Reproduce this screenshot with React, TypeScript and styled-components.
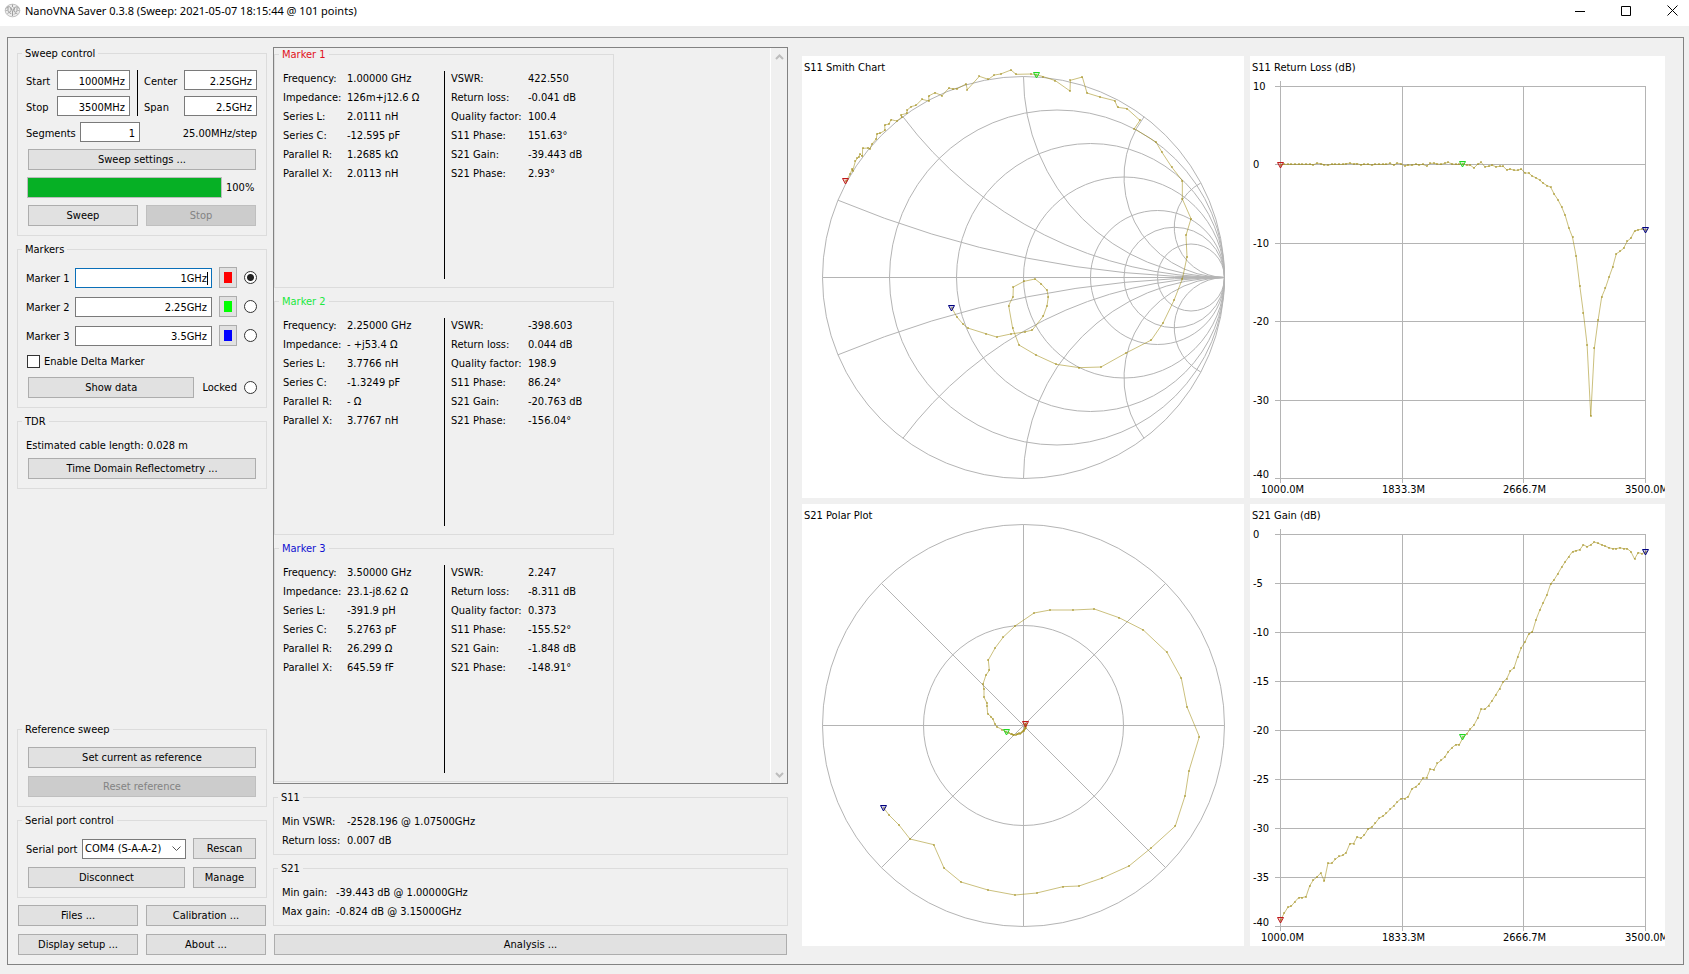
import React from 'react';
import styled, { createGlobalStyle } from 'styled-components';

const UI_FONT = '"DejaVu Sans Condensed", "DejaVu Sans", sans-serif';

const GlobalStyle = createGlobalStyle`
  * { box-sizing: border-box; }
  body {
    margin: 0;
    background: #f0f0f0;
    color: #000;
    font: 11px/13px ${UI_FONT};
  }
  button, input, select { font: inherit; color: inherit; margin: 0; }
`;

/* ---------- window ---------- */

const Window = styled.div`
  display: flex;
  flex-direction: column;
  min-height: 100vh;
`;

const TitleBar = styled.header`
  display: flex;
  align-items: center;
  height: 26px;
  padding: 0 0 5px 4px;
  background: #fff;
`;

const Title = styled.h1`
  margin: 0 auto 0 4px;
  font: 400 11px/16px "Noto Sans", sans-serif;
  white-space: nowrap;
`;

const WindowButtons = styled.div`
  display: flex;
  gap: 12px;
`;

const WindowButton = styled.button`
  display: flex;
  align-items: center;
  justify-content: center;
  width: 34px;
  height: 18px;
  padding: 0;
  border: 0;
  background: none;
`;

const Frame = styled.main`
  flex: 1;
  display: flex;
  gap: 6px;
  margin: 11px 5px 9px 7px;
  padding: 9px;
  border: 1px solid #828282;
`;

/* ---------- shared parts ---------- */

const Group = styled.fieldset<{ $tight?: boolean }>`
  display: flex;
  flex-direction: column;
  gap: 8px;
  min-width: 0;
  margin: 0;
  padding: ${(p) => (p.$tight ? 10 : 11)}px 9px 9px 8px;
  border: 1px solid #dcdcdc;
`;

const GroupTitle = styled.legend<{ $color?: string }>`
  margin-left: -4px;
  padding: 0 3px;
  color: ${(p) => p.$color ?? 'inherit'};
`;

const Button = styled.button`
  flex: 1;
  min-height: 21px;
  max-height: 21px;
  padding: 0 4px;
  border: 1px solid #adadad;
  background: #e1e1e1;
  white-space: nowrap;

  &:disabled {
    border-color: #bfbfbf;
    background: #ccc;
    color: #838383;
  }
`;

const ButtonRow = styled.div`
  display: flex;
  gap: 8px;
  margin: 0 1px 0 2px;
`;

const FieldLabel = styled.label`
  padding-top: 2px;
  white-space: nowrap;
`;

const TextInput = styled.input<{ $active?: boolean }>`
  width: 100%;
  min-width: 0;
  height: 20px;
  padding: 2px 4px 0;
  border: 1px solid ${(p) => (p.$active ? '#0a6fb8' : '#7a7a7a')};
  outline: 0;
  background: #fff;
  text-align: right;
`;

const Radio = styled.input`
  appearance: none;
  flex: none;
  justify-self: end;
  width: 13px;
  height: 13px;
  border: 1px solid #333;
  border-radius: 50%;
  background: #fff;

  &:checked {
    background: radial-gradient(circle, #222 3px, #fff 4px);
  }
`;

/* ---------- left column ---------- */

const Side = styled.aside`
  flex: none;
  display: flex;
  flex-direction: column;
  gap: 7px;
  width: 250px;
`;

const SideBottom = styled.div`
  display: flex;
  flex-direction: column;
  gap: 7px;
  margin-top: auto;
`;

const SweepGrid = styled.div`
  display: grid;
  grid-template-columns: 31px 1fr 14px 40px 1fr;
  row-gap: 6px;
  align-items: center;
`;

const Divider = styled.span`
  grid-area: 1 / 3 / 3 / 4;
  justify-self: center;
  align-self: stretch;
  width: 1px;
  background: #000;
`;

const SegmentRow = styled.div`
  display: grid;
  grid-template-columns: 54px 60px 1fr;
  align-items: center;
  margin: -2px 0 -1px;
`;

const Step = styled.span`
  padding-top: 2px;
  text-align: right;
`;

const SweepStack = styled.div`
  display: flex;
  flex-direction: column;
  gap: 7px;
`;

const ProgressRow = styled.label`
  display: flex;
  align-items: center;
  gap: 4px;
  margin-left: 1px;
`;

const Progress = styled.progress`
  appearance: none;
  flex: 1;
  min-width: 0;
  height: 21px;
  border: 1px solid #bcbcbc;

  &::-webkit-progress-bar { background: #e6e6e6; }
  &::-webkit-progress-value { background: #06b025; }
`;

const Percent = styled.span`
  width: 31px;
`;

const MarkerLine = styled.div`
  display: grid;
  grid-template-columns: 49px 1fr 18px 20px;
  align-items: center;
  height: 21px;
`;

const MarkerField = styled.div`
  position: relative;
  display: flex;
  margin-right: 7px;
`;

const Caret = styled.span`
  position: absolute;
  top: 4px;
  right: 4px;
  width: 1px;
  height: 13px;
  background: #000;
`;

const ColorButton = styled.button<{ $color: string }>`
  width: 18px;
  height: 21px;
  padding: 4px;
  border: 1px solid #adadad;
  background: linear-gradient(${(p) => p.$color}, ${(p) => p.$color}) content-box, #e1e1e1;
`;

const CheckRow = styled.label`
  display: flex;
  align-items: center;
  gap: 4px;
  height: 15px;
  margin-left: 1px;
`;

const CheckBox = styled.input`
  appearance: none;
  width: 13px;
  height: 13px;
  border: 1px solid #333;
  background: #fff;
`;

const ShowRow = styled.div`
  display: flex;
  align-items: center;
  margin-left: 2px;
`;

const LockedLabel = styled.label`
  display: flex;
  align-items: center;
  gap: 7px;
  margin-left: 8px;
`;

const CableLine = styled.div`
  display: flex;
  gap: 3px;
  margin-bottom: -2px;
  white-space: nowrap;
`;

const PortGrid = styled.div`
  display: grid;
  grid-template-columns: 56px 1fr 63px;
  gap: 8px 0;
  align-items: center;
  margin-right: 1px;
`;

const SelectBox = styled.div`
  position: relative;
  margin-right: 7px;

  & > svg { position: absolute; right: 5px; top: 7px; pointer-events: none; }
`;

const Select = styled.select`
  appearance: none;
  display: block;
  width: 100%;
  height: 20px;
  padding: 0 16px 0 2px;
  border: 1px solid #7a7a7a;
  border-radius: 0;
  background: #fff;
`;

const Disconnect = styled(Button)`
  grid-column: 1 / 3;
  margin: 0 8px 0 2px;
`;

const FooterButtons = styled.div`
  display: grid;
  grid-template-columns: 1fr 1fr;
  gap: 8px;
  margin: 0 1px;
`;

/* ---------- middle column ---------- */

const Middle = styled.section`
  flex: none;
  display: flex;
  flex-direction: column;
  gap: 7px;
  width: 515px;
`;

const ScrollArea = styled.div`
  flex: 1;
  display: flex;
  justify-content: space-between;
  border: 1px solid #828282;
`;

const MarkerList = styled.div`
  display: flex;
  flex-direction: column;
  gap: 7px;
  width: 340px;
`;

const MarkerGroup = styled(Group)`
  padding-bottom: 8px;
`;

const Facts = styled.dl<{ $label: number }>`
  display: grid;
  grid-template-columns: ${(p) => p.$label}px 1fr;
  align-content: start;
  row-gap: 6px;
  margin: 0;
  white-space: nowrap;

  & dt, & dd { margin: 0; }
`;

const MarkerColumns = styled.div`
  display: grid;
  grid-template-columns: 161px 1px 1fr;
  min-height: 208px;

  & > ${Facts} { margin-top: 1px; }
  & > ${Facts}:last-child { margin-left: 6px; }
`;

const Rule = styled.span`
  background: #000;
`;

const ScrollBar = styled.div`
  display: flex;
  flex-direction: column;
  align-items: center;
  justify-content: space-between;
  width: 17px;
  padding: 6px 0 5px;
  border-left: 1px solid #fff;
`;

const StatGroup = styled(Group)`
  padding-bottom: 7px;
`;

const AnalysisRow = styled(ButtonRow)`
  margin: 1px 1px 0;
`;

/* ---------- charts ---------- */

const Charts = styled.section`
  flex: 1;
  min-width: 0;
  display: grid;
  grid-template-columns: 442fr 415fr;
  grid-template-rows: repeat(2, minmax(0, 1fr));
  gap: 6px;
  padding: 9px 9px 9px 8px;
`;

const ChartPanel = styled.figure`
  display: flex;
  min-width: 0;
  margin: 0;
  background: #fff;
`;

const Plot = styled.svg`
  width: 100%;
  height: 100%;
  font: 11px ${UI_FONT};
`;

const GridLines = styled.g`
  fill: none;
  stroke: #b4b4b4;
  shape-rendering: crispEdges;
`;

const CurveGrid = styled.g`
  fill: none;
  stroke: #b4b4b4;
`;

type Point = [number, number];

const GOLD = 'rgb(160, 140, 20)';
const RED = '#c01818';
const GREEN = '#20d820';
const BLUE = '#000080';

const Trace = ({ points }: { points: Point[] }) => (
  <g>
    {points.slice(1).map(([x, y], i) => (
      <path key={i} d={`M${points[i].join(' ')}L${x} ${y}`} stroke={GOLD} strokeOpacity="0.550" />
    ))}
    {points.map(([x, y], i) => (
      <rect key={i} x={Math.round(x) - 1} y={Math.round(y) - 1} width="2" height="2" fill={GOLD} fillOpacity="0.500" />
    ))}
  </g>
);

const Flag = ({ at, color }: { at: Point; color: string }) => (
  <path
    d="M-3 -2.500h6l-3 5.500z"
    transform={`translate(${Math.floor(at[0]) + 0.5} ${Math.round(at[1])})`}
    fill={color}
    fillOpacity="0.2"
    stroke={color}
  />
);

const C = 221.5;
const R = 201;

const pairs = (flat: number[], dy: number): Point[] => {
  const out: Point[] = [];
  for (let i = 0; i < flat.length; i += 2) out.push([flat[i] / 3 - 2, flat[i + 1] / 3 - dy]);
  return out;
};

/* Traces are kept on a three-times grid of the plot area. */
const smithTrace = pairs([
  138, 424, 150, 403, 157, 386, 158, 393, 166, 364, 172, 354, 176, 352, 180, 342, 187, 349, 188, 325, 205, 324,
  210, 327, 216, 312, 229, 297, 231, 281, 240, 280, 255, 271, 254, 255, 267, 252, 273, 239, 290, 243, 305, 232,
  303, 225, 320, 220, 322, 210, 333, 200, 348, 196, 366, 178, 387, 183, 386, 168, 405, 158, 426, 167, 447, 144,
  459, 147, 472, 146, 498, 132, 502, 149, 538, 109, 565, 118, 583, 105, 602, 102, 633, 90, 648, 103, 692, 102,
  708, 104, 730, 110, 766, 122, 810, 153, 811, 121, 847, 111, 861, 159, 900, 171, 944, 182, 953, 202, 981, 206,
  1020, 241, 1003, 266, 1068, 306, 1086, 337, 1115, 381, 1147, 422, 1147, 477, 1173, 536, 1158, 586, 1161, 651,
  1147, 717, 1122, 781, 1089, 849, 1054, 900, 978, 939, 903, 981, 838, 983, 769, 973, 708, 945, 657, 915,
  638, 865, 626, 797, 639, 770, 640, 741, 672, 724, 705, 717, 724, 732, 741, 751, 745, 770, 741, 797, 730, 828,
  697, 870, 674, 876, 632, 882, 590, 891, 557, 881, 503, 864, 488, 851, 470, 830, 456, 805,
], 16);

const polarTrace = pairs([
  676, 672, 678, 673, 677, 676, 678, 679, 676, 680, 677, 683, 675, 685, 675, 688, 672, 690, 671, 693, 668, 694,
  667, 697, 664, 698, 660, 701, 658, 700, 655, 703, 650, 703, 647, 705, 642, 704, 639, 705, 636, 702, 632, 702,
  628, 699, 619, 696, 607, 689, 590, 680, 585, 672, 579, 658, 573, 650, 563, 641, 561, 618, 561, 609, 552, 592,
  552, 568, 549, 552, 558, 525, 568, 511, 565, 480, 586, 443, 610, 411, 645, 378, 702, 339, 750, 330, 819, 330,
  883, 327, 957, 353, 1030, 390, 1101, 457, 1144, 535, 1161, 621, 1198, 710, 1167, 812, 1155, 888, 1126, 978,
  1052, 1045, 987, 1098, 907, 1134, 837, 1158, 789, 1160, 710, 1179, 645, 1185, 564, 1170, 483, 1146, 432, 1104,
  401, 1034, 330, 1017, 297, 975, 267, 945, 252, 925,
], 4);

const reactanceArc = (x: number, sign: 1 | -1) => {
  const theta = 2 * Math.atan(1 / x);
  const px = C + R * Math.cos(theta);
  const py = C - sign * R * Math.sin(theta);
  return `M${px} ${py}A${R / x} ${R / x} 0 0 ${sign === 1 ? 0 : 1} ${C + R} ${C}`;
};

const SmithChart = () => (
  <Plot viewBox="0 0 442 442" role="img" aria-label="S11 Smith Chart">
    <CurveGrid>
      {[1, 5 / 6, 2 / 3, 1 / 2, 1 / 3, 1 / 4, 1 / 6].map((f) => (
        <circle key={f} cx={C + R * (1 - f)} cy={C} r={R * f} />
      ))}
      {[0.2, 0.5, 1, 2, 4].map((x) => (
        <path key={x} d={reactanceArc(x, 1) + reactanceArc(x, -1)} />
      ))}
      <path d={`M${C - R} ${C}H${C + R}`} />
    </CurveGrid>
    <text x="2" y="15">S11 Smith Chart</text>
    <Trace points={smithTrace} />
    <Flag at={[43, 125]} color={RED} />
    <Flag at={[234, 19]} color={GREEN} />
    <Flag at={[149, 252]} color={BLUE} />
  </Plot>
);

const PolarChart = () => {
  const d = R * Math.SQRT1_2;
  return (
    <Plot viewBox="0 0 442 442" role="img" aria-label="S21 Polar Plot">
      <CurveGrid>
        <circle cx={C} cy={C} r={R} />
        <circle cx={C} cy={C} r={100} />
        <path d={`M${C - R} ${C}H${C + R}M${C} ${C - R}V${C + R}`} />
        <path d={`M${C - d} ${C - d}L${C + d} ${C + d}M${C - d} ${C + d}L${C + d} ${C - d}`} />
      </CurveGrid>
      <text x="2" y="15">S21 Polar Plot</text>
      <Trace points={polarTrace} />
      <Flag at={[223, 220]} color={RED} />
      <Flag at={[204, 228]} color={GREEN} />
      <Flag at={[81, 304]} color={BLUE} />
    </Plot>
  );
};

const returnLoss = [
  -0.04, 0, 0, 0, 0, 0, 0, 0, 0, -0.05, 0.15, 0.1, -0.05, -0.1, 0, 0, 0, 0, 0.1, 0.15, 0.05, 0.1, -0.05, 0, 0,
  -0.08, 0, 0, 0, 0, 0.12, -0.08, 0.15, 0.08, -0.18, -0.1, -0.1, 0, -0.05, 0, -0.2, 0.12, 0.15, 0.05, 0, 0.15,
  0.25, 0.05, 0, 0, 0.04, -0.1, -0.1, -0.45, 0, 0.25, -0.3, -0.25, -0.1, -0.3, -0.25, -0.25, -0.7, -0.6, -0.75,
  -0.75, -0.6, -1.1, -1.1, -1.5, -1.7, -2, -2.4, -2.7, -2.9, -3.8, -4.5, -5.4, -6.5, -8.1, -9.3, -11.7, -15.5,
  -19, -23, -32.1, -23.4, -19.9, -16.9, -15.8, -14.4, -13.1, -11.4, -11.1, -10.7, -9.8, -9.4, -8.5, -8.35, -8.25,
  -8.31,
];

const gain = [
  -39.4, -38.7, -38.1, -37.95, -37.5, -37.1, -37.1, -37, -35.9, -35.3, -35, -34.6, -35.4, -33.6, -33.6, -33.2,
  -32.9, -32.8, -32.5, -31.6, -31.6, -30.9, -31.05, -30.7, -30.1, -29.9, -29.5, -29, -28.8, -28.5, -28.1, -27.75,
  -27.35, -27, -27, -26.8, -26, -25.8, -25.5, -24.9, -24.9, -24, -24.05, -23.4, -23.1, -22.75, -22.2, -21.8,
  -21.5, -21.5, -20.76, -20.4, -19.9, -19.5, -18.8, -17.85, -17.9, -17.5, -17, -16.4, -15.8, -15.1, -14.75,
  -13.95, -13.65, -12.5, -11.6, -11, -10.2, -10, -8.75, -7.8, -7, -6.2, -5.1, -4.65, -4.05, -3.4, -2.85, -2.3,
  -1.8, -1.7, -1.6, -1.1, -1.3, -1.1, -0.82, -0.95, -1.1, -1.25, -1.4, -1.5, -1.5, -1.4, -1.5, -1.5, -1.8, -2.55,
  -1.9, -2, -1.85,
];

const FREQUENCIES: [string, number, number][] = [
  ['1000.0M', 30, 11],
  ['1833.3M', 152, 132],
  ['2666.7M', 273, 253],
  ['3500.0M', 395, 375],
];

type LogChartProps = { title: string; values: number[]; top: number; step: number };

const LogChart = ({ title, values, top, step }: LogChartProps) => {
  const bottom = -40;
  const yOf = (v: number) => 30 + ((top - v) / (top - bottom)) * 392;
  const points = values.map((v, i): Point => [30.5 + i * 3.65, yOf(v)]);
  const ticks: number[] = [];
  for (let t = top; t >= bottom; t -= step) ticks.push(t);
  return (
    <Plot viewBox="0 0 415 442" role="img" aria-label={title}>
      <GridLines>
        {ticks.map((t) => (
          <path key={t} d={`M25 ${Math.round(yOf(t)) + 0.5}H396`} />
        ))}
        {FREQUENCIES.map(([name, x], i) => (
          <path key={name} d={`M${x + 0.5} ${i ? 30 : 25}V427`} />
        ))}
      </GridLines>
      <text x="2" y="15">{title}</text>
      {ticks.map((t) => (
        <text key={t} x="3" y={t === bottom ? 422 : Math.round(yOf(t)) + 4}>{t}</text>
      ))}
      {FREQUENCIES.map(([name, , x]) => (
        <text key={name} x={x} y="437">{name}</text>
      ))}
      <Trace points={points} />
      <Flag at={points[0]} color={RED} />
      <Flag at={[212, points[50][1]]} color={GREEN} />
      <Flag at={points[100]} color={BLUE} />
    </Plot>
  );
};

/* ---------- data ---------- */

const markers = [
  {
    name: 'Marker 1', value: '1GHz', swatch: '#ff0000', title: '#e01020',
    left: ['1.00000 GHz', '126m+j12.6 Ω', '2.0111 nH', '-12.595 pF', '1.2685 kΩ', '2.0113 nH'],
    right: ['422.550', '-0.041 dB', '100.4', '151.63°', '-39.443 dB', '2.93°'],
  },
  {
    name: 'Marker 2', value: '2.25GHz', swatch: '#00ff00', title: '#20e840',
    left: ['2.25000 GHz', '- +j53.4 Ω', '3.7766 nH', '-1.3249 pF', '- Ω', '3.7767 nH'],
    right: ['-398.603', '0.044 dB', '198.9', '86.24°', '-20.763 dB', '-156.04°'],
  },
  {
    name: 'Marker 3', value: '3.5GHz', swatch: '#0000ff', title: '#1010d0',
    left: ['3.50000 GHz', '23.1-j8.62 Ω', '-391.9 pH', '5.2763 pF', '26.299 Ω', '645.59 fF'],
    right: ['2.247', '-8.311 dB', '0.373', '-155.52°', '-1.848 dB', '-148.91°'],
  },
];

const LEFT_LABELS = ['Frequency:', 'Impedance:', 'Series L:', 'Series C:', 'Parallel R:', 'Parallel X:'];
const RIGHT_LABELS = ['VSWR:', 'Return loss:', 'Quality factor:', 'S11 Phase:', 'S21 Gain:', 'S21 Phase:'];

type FactListProps = { labels: string[]; values: string[]; width: number };

const FactList = ({ labels, values, width }: FactListProps) => (
  <Facts $label={width}>
    {labels.map((label, i) => (
      <React.Fragment key={label}>
        <dt>{label}</dt>
        <dd>{values[i]}</dd>
      </React.Fragment>
    ))}
  </Facts>
);

const Chevron = () => (
  <svg width="9" height="6" viewBox="0 0 9 6" fill="none" stroke="#555">
    <path d="M0.500 0.500l4 4 4-4" />
  </svg>
);

const ScrollArrow = ({ up }: { up?: boolean }) => (
  <svg width="9" height="6" viewBox="0 0 9 6" fill="none" stroke="#bdbdbd" strokeWidth="2">
    <path d={up ? 'M1 5l3.500-3.500L8 5' : 'M1 1l3.500 3.500L8 1'} />
  </svg>
);

const AppIcon = () => (
  <svg width="17" height="17" viewBox="0 0 17 17" fill="none" stroke="#8c8c8c" strokeWidth="0.800">
    <ellipse cx="8.500" cy="8.500" rx="7.300" ry="6.300" fill="#ececec" stroke="#b4b4b4" />
    <path d="M2 6.500c2-2.500 4-2.500 5 0s3 2 3.500 0 3-2.500 4.500 0" />
    <path d="M4 5v3.500c0 2 3 2 3 0V5.500M10 5v4c0 1.500 3 1.500 3 0V5.500" />
    <path d="M3.500 11.500c1.500-1.500 3-1 3.500.5M8.500 9v5M10 12.500c1-1.500 2.500-1.500 3.500-.5M8.500 2.500v2.500" />
    <path d="M1.500 8.500h2M13.500 8.500h2" stroke="#a8a8a8" />
  </svg>
);

export default function App() {
  return (
    <Window>
      <GlobalStyle />
      <TitleBar>
        <AppIcon />
        <Title>NanoVNA Saver 0.3.8 (Sweep: 2021-05-07 18:15:44 @ 101 points)</Title>
        <WindowButtons>
          <WindowButton aria-label="Minimize">
            <svg width="10" height="10" stroke="#000"><path d="M0 5.500h10" /></svg>
          </WindowButton>
          <WindowButton aria-label="Maximize">
            <svg width="10" height="10" fill="none" stroke="#000"><path d="M0.500 0.500h9v9h-9z" /></svg>
          </WindowButton>
          <WindowButton aria-label="Close">
            <svg width="11" height="11" stroke="#000"><path d="M0.500 0.500l10 10M10.500 0.500l-10 10" /></svg>
          </WindowButton>
        </WindowButtons>
      </TitleBar>

      <Frame>
        <Side>
          <Group $tight>
            <GroupTitle>Sweep control</GroupTitle>
            <SweepGrid>
              <FieldLabel htmlFor="start">Start</FieldLabel>
              <TextInput id="start" defaultValue="1000MHz" />
              <Divider />
              <FieldLabel htmlFor="center">Center</FieldLabel>
              <TextInput id="center" defaultValue="2.25GHz" />
              <FieldLabel htmlFor="stop">Stop</FieldLabel>
              <TextInput id="stop" defaultValue="3500MHz" />
              <FieldLabel htmlFor="span">Span</FieldLabel>
              <TextInput id="span" defaultValue="2.5GHz" />
            </SweepGrid>
            <SegmentRow>
              <FieldLabel htmlFor="segments">Segments</FieldLabel>
              <TextInput id="segments" defaultValue="1" />
              <Step>25.00MHz/step</Step>
            </SegmentRow>
            <SweepStack>
              <ButtonRow><Button>Sweep settings ...</Button></ButtonRow>
              <ProgressRow>
                <Progress value={100} max={100} />
                <Percent>100%</Percent>
              </ProgressRow>
              <ButtonRow>
                <Button>Sweep</Button>
                <Button disabled>Stop</Button>
              </ButtonRow>
            </SweepStack>
          </Group>

          <Group>
            <GroupTitle>Markers</GroupTitle>
            {markers.map((m, i) => (
              <MarkerLine key={m.name}>
                <FieldLabel htmlFor={`marker${i}`}>{m.name}</FieldLabel>
                <MarkerField>
                  <TextInput id={`marker${i}`} defaultValue={m.value} $active={i === 0} />
                  {i === 0 && <Caret />}
                </MarkerField>
                <ColorButton $color={m.swatch} aria-label={`${m.name} colour`} />
                <Radio type="radio" name="marker" defaultChecked={i === 0} aria-label={m.name} />
              </MarkerLine>
            ))}
            <CheckRow>
              <CheckBox type="checkbox" />
              Enable Delta Marker
            </CheckRow>
            <ShowRow>
              <Button>Show data</Button>
              <LockedLabel>
                Locked
                <Radio type="radio" name="locked" />
              </LockedLabel>
            </ShowRow>
          </Group>

          <Group>
            <GroupTitle>TDR</GroupTitle>
            <CableLine>
              <span>Estimated cable length:</span>
              <span>0.028 m</span>
            </CableLine>
            <ButtonRow><Button>Time Domain Reflectometry ...</Button></ButtonRow>
          </Group>

          <SideBottom>
            <Group>
              <GroupTitle>Reference sweep</GroupTitle>
              <ButtonRow><Button>Set current as reference</Button></ButtonRow>
              <ButtonRow><Button disabled>Reset reference</Button></ButtonRow>
            </Group>
            <Group>
              <GroupTitle>Serial port control</GroupTitle>
              <PortGrid>
                <FieldLabel htmlFor="port">Serial port</FieldLabel>
                <SelectBox>
                  <Select id="port"><option>COM4 (S-A-A-2)</option></Select>
                  <Chevron />
                </SelectBox>
                <Button>Rescan</Button>
                <Disconnect>Disconnect</Disconnect>
                <Button>Manage</Button>
              </PortGrid>
            </Group>
            <FooterButtons>
              <Button>Files ...</Button>
              <Button>Calibration ...</Button>
              <Button>Display setup ...</Button>
              <Button>About ...</Button>
            </FooterButtons>
          </SideBottom>
        </Side>

        <Middle>
          <ScrollArea>
            <MarkerList>
              {markers.map((m) => (
                <MarkerGroup key={m.name} $tight>
                  <GroupTitle $color={m.title}>{m.name}</GroupTitle>
                  <MarkerColumns>
                    <FactList labels={LEFT_LABELS} values={m.left} width={64} />
                    <Rule />
                    <FactList labels={RIGHT_LABELS} values={m.right} width={77} />
                  </MarkerColumns>
                </MarkerGroup>
              ))}
            </MarkerList>
            <ScrollBar>
              <ScrollArrow up />
              <ScrollArrow />
            </ScrollBar>
          </ScrollArea>
          <StatGroup>
            <GroupTitle>S11</GroupTitle>
            <FactList labels={['Min VSWR:', 'Return loss:']} values={['-2528.196 @ 1.07500GHz', '0.007 dB']} width={65} />
          </StatGroup>
          <StatGroup>
            <GroupTitle>S21</GroupTitle>
            <FactList
              labels={['Min gain:', 'Max gain:']}
              values={['-39.443 dB @ 1.00000GHz', '-0.824 dB @ 3.15000GHz']}
              width={54}
            />
          </StatGroup>
          <AnalysisRow><Button>Analysis ...</Button></AnalysisRow>
        </Middle>

        <Charts>
          <ChartPanel><SmithChart /></ChartPanel>
          <ChartPanel><LogChart title="S11 Return Loss (dB)" values={returnLoss} top={10} step={10} /></ChartPanel>
          <ChartPanel><PolarChart /></ChartPanel>
          <ChartPanel><LogChart title="S21 Gain (dB)" values={gain} top={0} step={5} /></ChartPanel>
        </Charts>
      </Frame>
    </Window>
  );
}
